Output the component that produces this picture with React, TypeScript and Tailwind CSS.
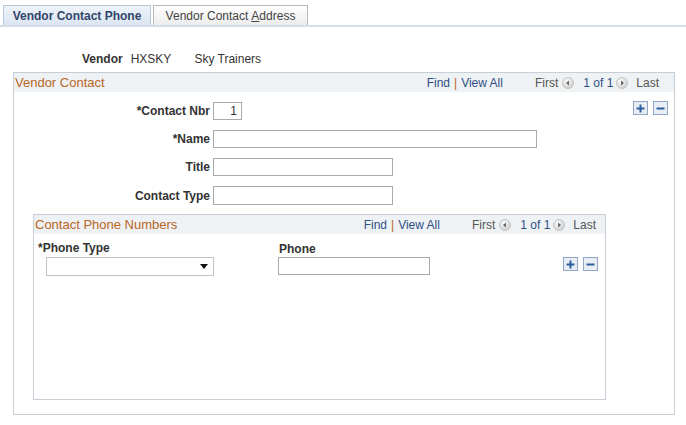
function ArrowBtn({ dir }: { dir: "left" | "right" }) {
  return (
    <svg width="12" height="12" viewBox="0 0 12 12">
      <defs>
        <radialGradient id={"g" + dir} cx="40%" cy="35%" r="70%">
          <stop offset="0%" stopColor="#ffffff" />
          <stop offset="100%" stopColor="#c9c9c9" />
        </radialGradient>
      </defs>
      <circle cx="6" cy="6" r="5.5" fill={"url(#g" + dir + ")"} stroke="#c4c4c4" />
      {dir === "left" ? (
        <path d="M4 6 L7 3.5 L7 8.5 Z" fill="#666" />
      ) : (
        <path d="M8 6 L5 3.5 L5 8.5 Z" fill="#666" />
      )}
    </svg>
  );
}

function PlusMinus() {
  return (
    <div className="flex gap-[5px]">
      <button className="w-[15px] h-[14px] border border-[#8fa7c4] bg-[#e9eef4] flex items-center justify-center">
        <svg width="9" height="9" viewBox="0 0 9 9">
          <path d="M4.5 0.5 V8.5 M0.5 4.5 H8.5" stroke="#2c5e9e" strokeWidth="2" />
        </svg>
      </button>
      <button className="w-[15px] h-[14px] border border-[#8fa7c4] bg-[#e9eef4] flex items-center justify-center">
        <svg width="9" height="9" viewBox="0 0 9 9">
          <path d="M0.5 4.5 H8.5" stroke="#2c5e9e" strokeWidth="2" />
        </svg>
      </button>
    </div>
  );
}

function Nav({ gapFind }: { gapFind: string }) {
  return (
    <div className="flex items-center text-[12px]">
      <span className="text-[#2f4f86]">Find</span>
      <span className="text-[#b8661f] mx-[4px]">|</span>
      <span className="text-[#2f4f86]">View All</span>
      <span className={"text-[#555] " + gapFind}>First</span>
      <span className="ml-[4px]">
        <ArrowBtn dir="left" />
      </span>
      <span className="text-[#2f4f86] ml-[9px]">1 of 1</span>
      <span className="ml-[3px]">
        <ArrowBtn dir="right" />
      </span>
      <span className="text-[#555] ml-[8px]">Last</span>
    </div>
  );
}

export default function App() {
  return (
    <div
      className="w-[686px] h-[425px] bg-white text-[12px] text-[#333] overflow-hidden"
      style={{ fontFamily: '"Liberation Sans", Arial, sans-serif' }}
    >
      {/* tabs */}
      <div className="pt-[5px] border-b-2 border-[#d3deeb] flex pl-[3px] gap-[2px]">
        <div className="w-[148px] h-[20px] border border-b-0 border-[#b9c7d9] bg-gradient-to-b from-[#eef3f9] to-[#dbe5f1] flex items-center justify-center font-bold text-[#30456a]">
          Vendor Contact Phone
        </div>
        <div className="w-[155px] h-[20px] border border-b-0 border-[#b8b8b8] bg-gradient-to-b from-[#ffffff] to-[#ececec] flex items-center justify-center text-[#444]">
          Vendor Contact <span className="underline ml-[3px]">A</span>ddress
        </div>
      </div>

      {/* vendor line */}
      <div className="flex mt-[24px] h-[15px] items-center">
        <span className="ml-[82px] font-bold">Vendor</span>
        <span className="ml-[8px]">HXSKY</span>
        <span className="ml-[23px]">Sky Trainers</span>
      </div>

      {/* outer box */}
      <div className="ml-[13px] mt-[6px] w-[662px] h-[343px] border border-[#c8ced6]">
        <div className="h-[19px] bg-[#eff2f4] flex items-center justify-between pl-[1px] pr-[15px]">
          <span className="text-[#b8661f] text-[13px]">Vendor Contact</span>
          <Nav gapFind="ml-[32px]" />
        </div>

        <div className="flex justify-between pr-[6px]">
          <div className="grid grid-cols-[196px_auto] gap-x-[3px] gap-y-[10px] mt-[10px] items-center">
            <span className="font-bold text-right">*Contact Nbr</span>
            <div className="w-[29px] h-[18px] border border-[#a9a9a9] flex items-center justify-end pr-[4px]">1</div>
            <span className="font-bold text-right">*Name</span>
            <div className="w-[324px] h-[18px] border border-[#a9a9a9]" />
            <span className="font-bold text-right">Title</span>
            <div className="w-[180px] h-[18px] border border-[#a9a9a9]" />
            <span className="font-bold text-right">Contact Type</span>
            <div className="w-[180px] h-[19px] border border-[#a9a9a9]" />
          </div>
          <div className="mt-[9px]">
            <PlusMinus />
          </div>
        </div>

        {/* inner box */}
        <div className="ml-[19px] mt-[9px] w-[573px] h-[186px] border border-[#c8ced6]">
          <div className="h-[19px] bg-[#eff2f4] flex items-center justify-between pl-[1px] pr-[9px]">
            <span className="text-[#b8661f] text-[13px]">Contact Phone Numbers</span>
            <Nav gapFind="ml-[32px]" />
          </div>
          <div className="flex pl-[4px] mt-[5px]">
            <div className="w-[240px]">
              <div className="font-bold h-[15px]">*Phone Type</div>
              <div className="ml-[8px] mt-[3px] w-[168px] h-[19px] border border-[#c3c3c3] flex items-center justify-end pr-[5px]">
                <svg width="8" height="5" viewBox="0 0 8 5">
                  <path d="M0 0 H8 L4 5 Z" fill="#111" />
                </svg>
              </div>
            </div>
            <div className="w-[284px]">
              <div className="font-bold h-[15px] ml-[1px] mt-[1px]">Phone</div>
              <div className="mt-[2px] w-[152px] h-[18px] border border-[#a9a9a9]" />
            </div>
            <div className="mt-[18px] ml-[1px]">
              <PlusMinus />
            </div>
          </div>
        </div>
      </div>
    </div>
  );
}
